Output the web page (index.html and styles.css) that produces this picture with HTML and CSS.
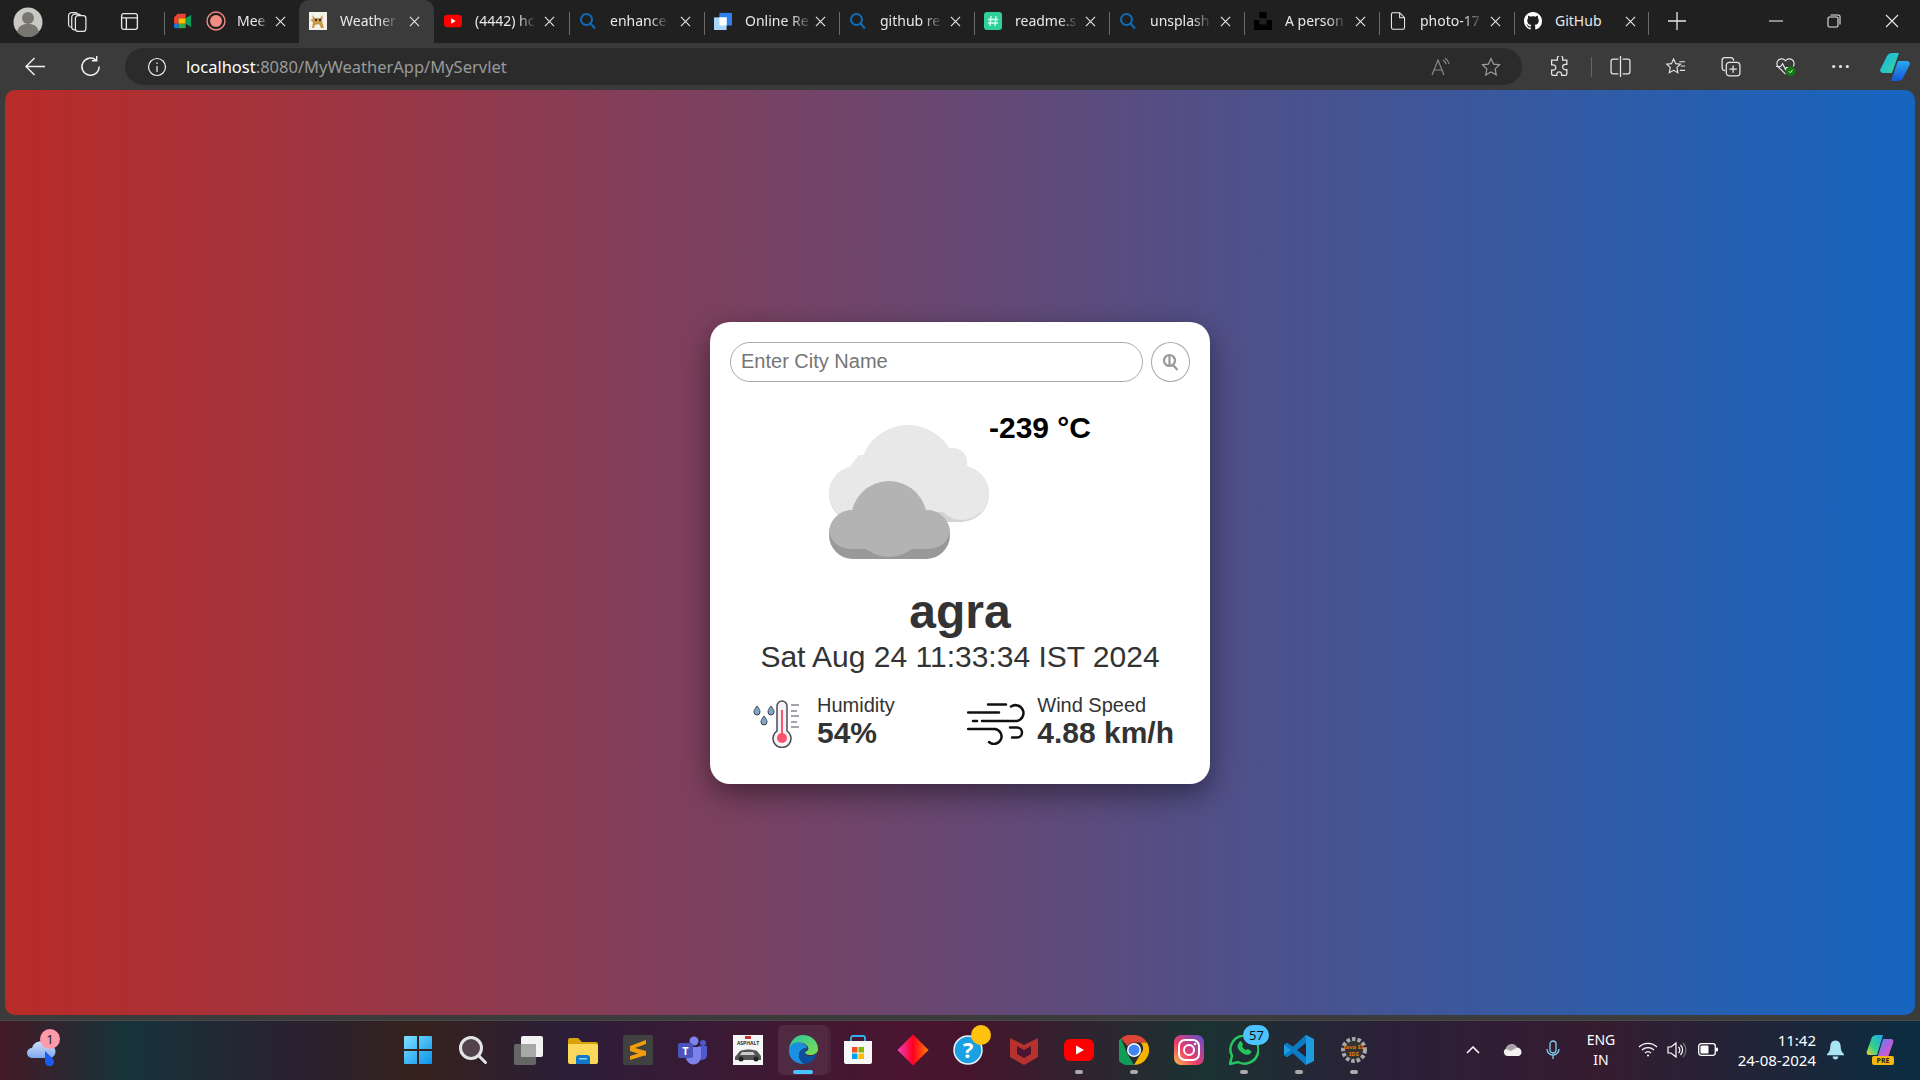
FILE: index.html
```html
<!DOCTYPE html>
<html>
<head>
    <meta charset="utf-8" />
    <title>Weather</title>
    <link rel="stylesheet" href="styles.css">
</head>
<body>
    <svg class="defs" width="0" height="0">
        <symbol id="x" viewBox="0 0 12 12"><path d="M1 1l10 10M11 1L1 11" fill="none" stroke="#e8e8e8" stroke-width="1.2"/></symbol>
        <symbol id="find" viewBox="0 0 18 18"><circle cx="7.5" cy="7.5" r="5.5" fill="none" stroke="#0f6cbd" stroke-width="2"/><path d="M11.5 11.5l4.5 5" stroke="#0f6cbd" stroke-width="2"/></symbol>
    </svg>

    <!-- tab strip -->
    <div class="tabstrip">
        <div class="strip-left">
            <svg class="avatar" viewBox="0 0 30 30"><circle cx="15" cy="15" r="14.5" fill="#c9c8c4"/><circle cx="15" cy="11" r="6" fill="#77766f"/><path d="M4 25c2-7 6-8 11-8s9 1 11 8a14 14 0 0 1-22 0z" fill="#77766f"/></svg>
            <svg class="strip-icon workspace" viewBox="0 0 20 20" fill="#202020" stroke="#e6e6e6" stroke-width="1.2"><rect x="1.500" y="1.500" width="9" height="14" rx="3"/><rect x="4.500" y="3" width="9" height="15" rx="3"/><rect x="8" y="4.500" width="10" height="15" rx="2.500"/></svg>
            <svg class="strip-icon vertical" viewBox="0 0 20 20" fill="none" stroke="#e6e6e6" stroke-width="1.3"><rect x="2.5" y="2.5" width="15" height="15" rx="2"/><path d="M2.5 6.5h15M7 6.5v11"/></svg>
        </div>
        <div class="tab first">
            <svg class="fav" viewBox="0 0 20 18"><path d="M4 1h9v5H5v6H0V5z" fill="#ea4335"/><path d="M0 12h5v5H2a2 2 0 0 1-2-2z" fill="#1a73e8"/><path d="M5 12h8v5H5z" fill="#34a853"/><path d="M5 6h8v6H5z" fill="#fbbc04"/><path d="M13 6l6-4v14l-6-4z" fill="#0f9d58"/></svg>
            <svg class="fav rec" viewBox="0 0 20 20"><circle cx="10" cy="10" r="9" fill="none" stroke="#f28b82" stroke-width="1.4"/><circle cx="10" cy="10" r="6" fill="#f28b82"/></svg>
            <span class="tab-title">Mee</span>
            <svg class="close"><use href="#x"/></svg>
        </div>
        <div class="tab active">
            <svg class="fav" viewBox="0 0 18 18"><rect width="18" height="18" fill="#f4f2ea"/><path d="M3 3l3 3h5l3-3-1 6 2 7h-3l-2-4-4 1-1 3H3l1-6-3-2 3-1z" fill="#c79a4b"/><path d="M6 7h2v2H6zM10 7h2v2h-2z" fill="#3a3020"/></svg>
            <span class="tab-title">Weather</span>
            <svg class="close"><use href="#x"/></svg>
        </div>
        <div class="tab nosep">
            <svg class="fav" viewBox="0 0 20 14"><rect width="20" height="14" rx="4" fill="#f00"/><path d="M8 4l5 3-5 3z" fill="#fff"/></svg>
            <span class="tab-title">(4442) hc</span>
            <svg class="close"><use href="#x"/></svg>
        </div>
        <div class="tab">
            <svg class="fav find"><use href="#find"/></svg>
            <span class="tab-title">enhance</span>
            <svg class="close"><use href="#x"/></svg>
        </div>
        <div class="tab">
            <svg class="fav" viewBox="0 0 20 20"><rect x="6" y="1" width="14" height="14" fill="#2f80ed"/><rect y="6" width="14" height="14" fill="#a9d6fb"/><rect x="6" y="6" width="8" height="9" fill="#fff"/></svg>
            <span class="tab-title">Online Re</span>
            <svg class="close"><use href="#x"/></svg>
        </div>
        <div class="tab">
            <svg class="fav find"><use href="#find"/></svg>
            <span class="tab-title">github re</span>
            <svg class="close"><use href="#x"/></svg>
        </div>
        <div class="tab">
            <svg class="fav" viewBox="0 0 18 18"><rect width="18" height="18" rx="3" fill="#2fd09b"/><path d="M7 4L6 14M12 4l-1 10M4 7.500h10M4 11h10" stroke="#d8fff0" stroke-width="1.300"/></svg>
            <span class="tab-title">readme.s</span>
            <svg class="close"><use href="#x"/></svg>
        </div>
        <div class="tab">
            <svg class="fav find"><use href="#find"/></svg>
            <span class="tab-title">unsplash</span>
            <svg class="close"><use href="#x"/></svg>
        </div>
        <div class="tab">
            <svg class="fav" viewBox="0 0 20 20"><path d="M6 0h8v7H6zM0 9h6v5h8V9h6v11H0z" fill="#000"/></svg>
            <span class="tab-title">A person</span>
            <svg class="close"><use href="#x"/></svg>
        </div>
        <div class="tab">
            <svg class="fav" viewBox="0 0 18 22" fill="none" stroke="#e8e8e8" stroke-width="1.300"><path d="M2 1h9l6 6v12a2 2 0 0 1-2 2H3a2 2 0 0 1-2-2V2z"/><path d="M11 1v6h6"/></svg>
            <span class="tab-title">photo-17</span>
            <svg class="close"><use href="#x"/></svg>
        </div>
        <div class="tab last">
            <svg class="fav" viewBox="0 0 16 16"><path fill="#fff" d="M8 0C3.58 0 0 3.58 0 8c0 3.54 2.29 6.53 5.47 7.59.4.07.55-.17.55-.38 0-.19-.01-.82-.01-1.49-2.01.37-2.53-.49-2.69-.94-.09-.23-.48-.94-.82-1.13-.28-.15-.68-.52-.01-.53.63-.01 1.08.58 1.23.82.72 1.21 1.87.87 2.33.66.07-.52.28-.87.51-1.07-1.78-.2-3.64-.89-3.64-3.95 0-.87.31-1.59.82-2.15-.08-.2-.36-1.02.08-2.12 0 0 .67-.21 2.2.82.64-.18 1.32-.27 2-.27.68 0 1.36.09 2 .27 1.53-1.04 2.2-.82 2.2-.82.44 1.1.16 1.92.08 2.12.51.56.82 1.27.82 2.15 0 3.07-1.87 3.75-3.65 3.95.29.25.54.73.54 1.48 0 1.07-.01 1.93-.01 2.2 0 .21.15.46.55.38A8.013 8.013 0 0016 8c0-4.42-3.58-8-8-8z"/></svg>
            <span class="tab-title plain">GitHub</span>
            <svg class="close"><use href="#x"/></svg>
        </div>
        <svg class="plus" viewBox="0 0 18 18"><path d="M9 0v18M0 9h18" stroke="#e8e8e8" stroke-width="1.300"/></svg>
        <div class="window-controls">
            <svg viewBox="0 0 14 14"><path d="M0 7h14" stroke="#e8e8e8" stroke-width="1.100"/></svg>
            <svg viewBox="0 0 14 14" fill="none" stroke="#e8e8e8" stroke-width="1.100"><rect x="1" y="3" width="10" height="10" rx="1.500"/><path d="M3.500 1h8a1.500 1.500 0 0 1 1.500 1.500v8"/></svg>
            <svg viewBox="0 0 14 14"><path d="M1 1l12 12M13 1L1 13" stroke="#e8e8e8" stroke-width="1.100"/></svg>
        </div>
    </div>

    <!-- toolbar -->
    <div class="toolbar">
        <svg class="nav back" viewBox="0 0 22 22" fill="none" stroke="#f0f0f0" stroke-width="1.500"><path d="M21 11H2M10 2l-9 9 9 9"/></svg>
        <svg class="nav reload" viewBox="0 0 22 22" fill="none" stroke="#f0f0f0" stroke-width="1.500"><path d="M17 4.500A9 9 0 1 0 20 11"/><path d="M17.500 0v5h-5"/></svg>
        <div class="addressbar">
            <svg class="info" viewBox="0 0 20 20" fill="none" stroke="#eee" stroke-width="1.200"><circle cx="10" cy="10" r="8.500"/><path d="M10 9v6M10 5.500v1.500"/></svg>
            <span class="url"><span class="host">localhost</span>:8080/MyWeatherApp/MyServlet</span>
            <svg class="bar-icon readaloud" viewBox="0 0 20 20" fill="none" stroke="#8a8a8a" stroke-width="1.200"><path d="M1 18L7 3l6 15M3 13h8M12 3a6 6 0 0 1 3 4M14 1a9 9 0 0 1 4 6"/></svg>
            <svg class="bar-icon" viewBox="0 0 20 20" fill="none" stroke="#9a9a9a" stroke-width="1.200"><path d="M10 1.500l2.600 5.600 6 .7-4.500 4.100 1.200 6L10 15l-5.300 3 1.200-6L1.400 7.800l6-.7z"/></svg>
        </div>
        <div class="tools">
            <svg class="tool" viewBox="0 0 20 20" fill="none" stroke="#e6e6e6" stroke-width="1.200"><path d="M8 1.500a2.500 2.500 0 0 1 5 1V4h4v4h-1.500a2.500 2.500 0 0 0 0 5H17v4a1.500 1.500 0 0 1-1.500 1.500H12V17a2.300 2.300 0 0 0-4.500 0v1.500H4A1.500 1.500 0 0 1 2.500 17v-3.500H4a2.500 2.500 0 0 0 0-5H2.500V4H8z"/></svg>
            <span class="tool-sep"></span>
            <svg class="tool" viewBox="0 0 20 20" fill="none" stroke="#e6e6e6" stroke-width="1.200"><path d="M10 0v20M8 3H3a2 2 0 0 0-2 2v10a2 2 0 0 0 2 2h5M12 3h5a2 2 0 0 1 2 2v10a2 2 0 0 1-2 2h-5"/></svg>
            <svg class="tool" viewBox="0 0 22 20" fill="none" stroke="#e6e6e6" stroke-width="1.200"><path d="M9 2l2.200 5 5 .5-3.700 3.500 1 5.500L9 14l-4.500 2.500 1-5.500L1.800 7.500l5-.5z"/><path d="M15 5h6M16.500 9.500H21M15.500 14H21"/></svg>
            <svg class="tool" viewBox="0 0 20 20" fill="none" stroke="#e6e6e6" stroke-width="1.200"><path d="M5 14c-2 0-3-1-3-3V4c0-1.500 1-2.500 2.500-2.500H10c1.500 0 3 1 3 3"/><rect x="6" y="6" width="13" height="13" rx="3"/><path d="M12.500 9v7M9 12.500h7"/></svg>
            <svg class="tool" viewBox="0 0 22 20"><path d="M11 18L3 10a5 5 0 0 1 8-6 5 5 0 0 1 8 6" fill="none" stroke="#e6e6e6" stroke-width="1.200"/><path d="M1 10h5l2-3 3 6 1-2h2" fill="none" stroke="#e6e6e6" stroke-width="1.200"/><circle cx="16.500" cy="15" r="5" fill="#107c10"/><path d="M14.500 15l1.500 1.500 2.500-3" fill="none" stroke="#fff" stroke-width="1"/></svg>
            <svg class="tool" viewBox="0 0 20 20" fill="#e6e6e6"><circle cx="3.500" cy="10" r="1.500"/><circle cx="10" cy="10" r="1.500"/><circle cx="16.500" cy="10" r="1.500"/></svg>
            <svg class="copilot" viewBox="0 0 30 28">
                <defs>
                    <linearGradient id="cpA" x1="0" y1="0" x2="1" y2="1"><stop offset="0" stop-color="#1bb4e8"/><stop offset="1" stop-color="#35d6a0"/></linearGradient>
                    <linearGradient id="cpB" x1="0" y1="0" x2="0" y2="1"><stop offset="0" stop-color="#2aa8f0"/><stop offset="1" stop-color="#1456d8"/></linearGradient>
                </defs>
                <path d="M7 3c1-2 3-3 5-3h7l-7 20H3c-2 0-3.500-2-2.500-4z" fill="url(#cpA)"/>
                <path d="M23 25c-1 2-3 3-5 3h-7l7-20h9c2 0 3.500 2 2.500 4z" fill="url(#cpB)"/>
            </svg>
        </div>
    </div>

    <!-- page -->
    <div class="frame">
        <main class="viewport">
            <div class="card">
                <form class="search" action="javascript:void(0);">
                    <input class="city-input" type="text" placeholder="Enter City Name">
                    <button class="search-btn" type="button">
                        <svg viewBox="0 0 18 18" width="18" height="18" fill="none" stroke="#999" stroke-width="2.200"><circle cx="7.500" cy="7.500" r="5.500"/><path d="M7.500 2v11M10 11l5.500 6"/></svg>
                    </button>
                </form>

                <div class="weather">
                    <svg class="weather-icon" viewBox="0 0 160 134">
                        <rect x="0" y="41" width="160" height="56" rx="28" fill="#d3d3d3"/>
                        <circle cx="27" cy="68" r="27" fill="#e8e8e8"/>
                        <circle cx="133" cy="68" r="27" fill="#e8e8e8"/>
                        <circle cx="124" cy="37" r="14" fill="#e8e8e8"/>
                        <circle cx="79" cy="48" r="48" fill="#e8e8e8"/>
                        <path d="M160 68C160 80 148 87 133 87H27C12 87 0 80 0 68L30 30H130z" fill="#e8e8e8"/>
                        <rect x="0" y="85" width="121" height="49" rx="24" fill="#999"/>
                        <circle cx="60" cy="94" r="38" fill="#b3b3b3"/>
                        <path d="M0 108C0 95 11 85 24 85H97C110 85 121 95 121 108 118 118 110 124 97 124H24C11 124 3 118 0 108z" fill="#b3b3b3"/>
                    </svg>
                    <div class="temp">-239 °C</div>
                </div>

                <h1 class="city">agra</h1>
                <div class="date">Sat Aug 24 11:33:34 IST 2024</div>

                <div class="details">
                    <div class="detail humidity">
                        <svg class="humidity-icon" viewBox="0 0 47 48">
                            <path d="M24 6a5 5 0 0 1 10 0v25a9 9 0 1 1-10 0z" fill="#f3f3f6" stroke="#4b4b5c" stroke-width="1.500"/>
                            <path d="M29 10v26" stroke="#f9526f" stroke-width="2"/>
                            <circle cx="29" cy="38" r="5" fill="#f9526f"/>
                            <path d="M38 5h8M38 11h6M38 16h8M38 22h6M38 27h8" stroke="#4b4b5c" stroke-width="1.200"/>
                            <g fill="#7fa6c4" stroke="#3f4658" stroke-width="1">
                                <path d="M4 6c2 3 3 4 3 6a3 3 0 0 1-6 0c0-2 1-3 3-6z"/>
                                <path d="M18 6c2 3 3 4 3 6a3 3 0 0 1-6 0c0-2 1-3 3-6z"/>
                                <path d="M11 16c2 3 3 4 3 6a3 3 0 0 1-6 0c0-2 1-3 3-6z"/>
                            </g>
                        </svg>
                        <div class="detail-text">
                            <span class="detail-label">Humidity</span>
                            <span class="detail-value">54%</span>
                        </div>
                    </div>
                    <div class="detail wind">
                        <svg class="wind-icon" viewBox="0 0 60 42" fill="none" stroke="#111" stroke-width="2.500" stroke-linecap="round">
                            <path d="M21 1.500h18M1 9.500h31M6 18h4"/>
                            <path d="M44 3.500a8 8 0 1 1 6 14.500H15"/>
                            <path d="M1 26h27a7.500 7.500 0 1 1-6 13"/>
                            <path d="M43 24.500h7a5 5 0 0 1 0 10h-5"/>
                        </svg>
                        <div class="detail-text">
                            <span class="detail-label">Wind Speed</span>
                            <span class="detail-value">4.88 km/h</span>
                        </div>
                    </div>
                </div>
            </div>
        </main>
    </div>

    <!-- taskbar -->
    <footer class="taskbar">
        <div class="widgets">
            <svg viewBox="0 0 32 28" width="32" height="28">
                <defs><linearGradient id="wCloud" x1="0" y1="0" x2="0" y2="1"><stop offset="0" stop-color="#cfe0fb"/><stop offset="1" stop-color="#7fa8ee"/></linearGradient></defs>
                <path d="M6 20a5 5 0 0 1 0-10 9 9 0 0 1 16-3 6.500 6.500 0 0 1 2 13z" fill="url(#wCloud)"/>
                <path d="M19 13l8 8a4.500 4.500 0 1 1-8 3z" fill="#1a5cf0"/>
            </svg>
            <span class="widget-badge">1</span>
        </div>

        <div class="apps">
            <div class="app">
                <svg viewBox="0 0 30 30"><defs><linearGradient id="win" x1="0" y1="0" x2="1" y2="1"><stop offset="0" stop-color="#7fe0ff"/><stop offset="1" stop-color="#0a93e8"/></linearGradient></defs><path d="M1 2a1 1 0 0 1 1-1h12v13H1zM16 1h12a1 1 0 0 1 1 1v12H16zM1 16h13v13H2a1 1 0 0 1-1-1zM16 16h13v12a1 1 0 0 1-1 1H16z" fill="url(#win)"/></svg>
            </div>
            <div class="app">
                <svg viewBox="0 0 30 30"><circle cx="13" cy="13" r="10.500" fill="#54424a" stroke="#e4e4e4" stroke-width="3"/><path d="M21 21l6.500 6.500" stroke="#e4e4e4" stroke-width="3" stroke-linecap="round"/></svg>
            </div>
            <div class="app">
                <svg viewBox="0 0 30 30"><rect x="1" y="9" width="22" height="21" rx="2" fill="#666"/><rect x="8" y="1" width="22" height="21" rx="2" fill="#f2f2f2"/><rect x="8" y="9" width="15" height="13" fill="#a8a8a8"/></svg>
            </div>
            <div class="app">
                <svg viewBox="0 0 30 30"><path d="M0 5a2 2 0 0 1 2-2h8l4 4h14a2 2 0 0 1 2 2v4H0z" fill="#d8a106"/><path d="M0 9h28a2 2 0 0 1 2 2v16a2 2 0 0 1-2 2H2a2 2 0 0 1-2-2z" fill="#fbd75b"/><path d="M8 29v-6a3 3 0 0 1 3-3h8a3 3 0 0 1 3 3v6z" fill="#0f78c9"/><rect x="11" y="23" width="8" height="1.500" fill="#8fd0f5"/></svg>
            </div>
            <div class="app">
                <svg viewBox="0 0 30 30"><rect width="30" height="30" rx="2" fill="#414141"/><path d="M23 5L7 11v5l16 5v-5L12 13l11-4zM7 25l16-5v-4L7 21z" fill="#f29d0c"/></svg>
            </div>
            <div class="app">
                <svg viewBox="0 0 30 30"><circle cx="16" cy="6" r="4.500" fill="#7b83eb"/><circle cx="25" cy="8" r="3" fill="#5059c9"/><path d="M20 11h9v9a5 5 0 0 1-9 3z" fill="#5059c9"/><path d="M8 12h15v10a7 7 0 0 1-15 0z" fill="#7b83eb"/><rect x="0" y="8" width="15" height="15" rx="2" fill="#4b53bc"/><text class="teams-t" x="7.500" y="20">T</text></svg>
            </div>
            <div class="app">
                <svg viewBox="0 0 30 30"><rect width="30" height="30" fill="#f6f6f6"/><rect x="12" y="1" width="6" height="3" fill="#c33"/><text class="asphalt-t" x="15" y="10">ASPHALT</text><path d="M2 22l5-6c5-2 12-2 17 0l4 5v4H2z" fill="#555"/><path d="M9 17h11l2 3H7z" fill="#ccc"/><circle cx="8" cy="24" r="2.500" fill="#222"/><circle cx="23" cy="24" r="2.500" fill="#222"/></svg>
            </div>
            <div class="app current">
                <svg viewBox="0 0 30 30"><defs><linearGradient id="edgeA" x1="0" y1="0" x2="1" y2="1"><stop offset="0" stop-color="#2bc4a0"/><stop offset="1" stop-color="#7fe04f"/></linearGradient></defs><path d="M1 14C2 6 8 0 15 0c8 0 15 6 15 14 0 4-4 6-8 6-3 0-5-1-5-3 3-1 4-3 3-5-2-4-7-5-10-4-5 1-8 4-9 6z" fill="url(#edgeA)"/><path d="M1 14c1-5 8-8 13-6 3 1 5 3 5 5-5 0-8 3-8 8 0 3 2 6 5 8C8 29 0 24 1 14z" fill="#1b8fe0"/><path d="M16 29c-3-2-5-5-5-8 0-5 3-8 8-8 0 2-1 3-2 4 0 3 2 4 5 4 3 0 5-1 7-3-2 7-7 11-13 11z" fill="#0d4f9c"/></svg>
            </div>
            <div class="app">
                <svg viewBox="0 0 30 30"><path d="M8 7V3a2 2 0 0 1 2-2h10a2 2 0 0 1 2 2v4" fill="none" stroke="#2bb5f0" stroke-width="1.800"/><path d="M1 6h28v21a2 2 0 0 1-2 2H3a2 2 0 0 1-2-2z" fill="#f7f7f7"/><rect x="9" y="12" width="5.500" height="5.500" fill="#f25022"/><rect x="15.500" y="12" width="5.500" height="5.500" fill="#7fba00"/><rect x="9" y="18.500" width="5.500" height="5.500" fill="#00a4ef"/><rect x="15.500" y="18.500" width="5.500" height="5.500" fill="#ffb900"/></svg>
            </div>
            <div class="app">
                <span class="diamond"></span>
            </div>
            <div class="app">
                <svg viewBox="0 0 30 30"><circle cx="15" cy="15" r="14" fill="#1ba1e2" stroke="#e8f4f8" stroke-width="1.500"/><text class="help-q" x="15" y="23">?</text></svg>
                <span class="dot-badge"></span>
            </div>
            <div class="app">
                <svg viewBox="0 0 30 30"><path d="M1 3l14 7 14-7v19L15 30 1 22z" fill="#b6322f"/><path d="M8 11l7 4 7-4v8l-7 4-7-4z" fill="#4a1530"/></svg>
            </div>
            <div class="app running">
                <svg viewBox="0 0 30 30"><rect y="4" width="30" height="22" rx="6" fill="#f00"/><path d="M12 10.500l8 4.500-8 4.500z" fill="#fff"/></svg>
            </div>
            <div class="app running">
                <svg viewBox="0 0 30 30"><path d="M15 0a15 15 0 0 1 13 7.500H15A7.500 7.500 0 0 0 8.500 11L2 3.500A15 15 0 0 1 15 0z" fill="#db4437"/><path d="M2 3.500L8.500 19 15 30A15 15 0 0 1 2 3.500z" fill="#0f9d58"/><path d="M28 7.500A15 15 0 0 1 15 30l6.500-11a7.500 7.500 0 0 0 0-11.500z" fill="#f4b400"/><circle cx="15" cy="15" r="7" fill="#fff"/><circle cx="15" cy="15" r="5.500" fill="#4285f4"/></svg>
            </div>
            <div class="app">
                <svg viewBox="0 0 30 30"><defs><linearGradient id="ig" x1="0" y1="1" x2="1" y2="0"><stop offset="0" stop-color="#fdc24a"/><stop offset=".4" stop-color="#ee3a6a"/><stop offset="1" stop-color="#5d4fd0"/></linearGradient></defs><rect width="30" height="30" rx="7" fill="url(#ig)"/><rect x="5" y="5" width="20" height="20" rx="6" fill="none" stroke="#fff" stroke-width="2"/><circle cx="15" cy="15" r="5" fill="none" stroke="#fff" stroke-width="2"/><circle cx="21" cy="9" r="1.300" fill="#fff"/></svg>
            </div>
            <div class="app running">
                <svg viewBox="0 0 30 30"><path d="M1 29l2-8a14 14 0 1 1 6 6z" fill="none" stroke="#25c65f" stroke-width="2.500"/><path d="M10 8c-2 2-2 5 1 8s7 5 10 3c1-1 2-3 1-3l-3-2-2 1c-2-1-3-2-4-4l1-2-2-3c-1 0-2 1-2 2z" fill="#25c65f"/></svg>
                <span class="count-badge">57</span>
            </div>
            <div class="app running">
                <svg viewBox="0 0 30 30"><path d="M22 0l8 4v22l-8 4-13-12-6 4-3-2V10l3-2 6 4z" fill="#1f9ce0"/><path d="M22 0v30L9 18l-6 4-3-2 7-5-7-5 3-2 6 4z" fill="#0a7bc4"/><path d="M22 8v14l-9-7z" fill="#2a2030"/></svg>
            </div>
            <div class="app running">
                <svg viewBox="0 0 30 30"><circle cx="15" cy="15" r="11" fill="#333" stroke="#aaa" stroke-width="4" stroke-dasharray="3.500 2"/><text class="ide-t" x="15" y="14">Java EE</text><text class="ide-t" x="15" y="21">IDE</text></svg>
            </div>
        </div>

        <div class="tray">
            <svg class="tray-chevron" viewBox="0 0 14 8"><path d="M1 7l6-6 6 6" fill="none" stroke="#fff" stroke-width="1.500"/></svg>
            <svg class="tray-cloud" viewBox="0 0 20 13"><path d="M4 13a4 4 0 0 1-1-7.500A6 6 0 0 1 14 4.500 4.500 4.500 0 0 1 16 13z" fill="#f2f2f2"/><path d="M3 6a6 6 0 0 1 11-1.500L8 8z" fill="#a9a0a8"/></svg>
            <svg class="tray-mic" viewBox="0 0 14 20" fill="none" stroke="#7fd0ee" stroke-width="1.300"><rect x="4" y="1" width="6" height="12" rx="3"/><path d="M1 9a6 6 0 0 0 12 0M7 15v4"/></svg>
            <div class="lang">ENG<br>IN</div>
            <svg class="tray-wifi" viewBox="0 0 20 15" fill="none" stroke="#fff" stroke-width="1.300"><path d="M1 5a13 13 0 0 1 18 0M4 8a9 9 0 0 1 12 0M7 11a4.500 4.500 0 0 1 6 0"/><circle cx="10" cy="13.500" r="1" fill="#fff" stroke="none"/></svg>
            <svg class="tray-vol" viewBox="0 0 20 16" fill="none" stroke="#fff" stroke-width="1.200"><path d="M1 5h3l5-4v14l-5-4H1z"/><path d="M11.500 5a4 4 0 0 1 0 6M13.500 3a7 7 0 0 1 0 10"/><path d="M16 1a10 10 0 0 1 0 14" stroke="#777"/></svg>
            <svg class="tray-batt" viewBox="0 0 20 13"><rect x=".7" y=".7" width="16.600" height="11.600" rx="2.500" fill="none" stroke="#fff" stroke-width="1.300"/><rect x="2.500" y="2.500" width="8" height="8" rx="1" fill="#fff"/><rect x="18" y="4.500" width="2" height="4" rx="1" fill="#fff"/></svg>
            <div class="clock">11:42<br>24-08-2024</div>
            <svg class="tray-bell" viewBox="0 0 18 20"><path d="M9 0c3.500 0 5.500 3 5.500 6.500 0 4 1.500 6 3.500 8v1H0v-1c2-2 3.500-4 3.500-8C3.500 3 5.500 0 9 0z" fill="#a9e4f5"/><path d="M6 17h6a3 3 0 0 1-6 0z" fill="#a9e4f5"/></svg>
            <div class="tray-copilot">
                <svg viewBox="0 0 28 24" width="28" height="24"><defs><linearGradient id="cpC" x1="0" y1="1" x2="1" y2="0"><stop offset="0" stop-color="#f0d030"/><stop offset=".4" stop-color="#35d08a"/><stop offset="1" stop-color="#20a8f0"/></linearGradient><linearGradient id="cpD" x1="0" y1="0" x2="1" y2="1"><stop offset="0" stop-color="#3a8ff0"/><stop offset=".5" stop-color="#b060e0"/><stop offset="1" stop-color="#f060a0"/></linearGradient></defs><path d="M6 2c1-1 3-2 4-2h7l-6 20H3c-2 0-3-2-2-4z" fill="url(#cpC)"/><path d="M22 22c-1 1-3 2-4 2h-7l6-20h8c2 0 3 2 2 4z" fill="url(#cpD)"/></svg>
                <span class="pre">PRE</span>
            </div>
        </div>
    </footer>
</body>
</html>
```

FILE: styles.css
```css
* {
    box-sizing: border-box;
}

body {
    margin: 0;
    width: 1920px;
    height: 1080px;
    overflow: hidden;
    display: flex;
    flex-direction: column;
    background: #3b3b3b;
    font-family: "Noto Sans", "Liberation Sans", sans-serif;
}

.defs {
    position: absolute;
}

/* Tab strip */
.tabstrip {
    height: 43px;
    display: flex;
    align-items: center;
    background: #202020;
    color: #e8e8e8;
    flex: none;
}

.strip-left {
    width: 164px;
    display: flex;
    align-items: center;
    flex: none;
    padding-left: 13px;
}

.avatar {
    width: 30px;
    height: 30px;
}

.strip-icon {
    width: 21px;
    height: 21px;
}

.workspace {
    margin-left: 24px;
}

.vertical {
    margin-left: 31px;
}

.tab {
    width: 135px;
    height: 43px;
    flex: none;
    display: flex;
    align-items: center;
    padding: 0 0 2px 9px;
    position: relative;
    border-left: 1px solid #6a6a6a;
    border-image: linear-gradient(#202020 12px, #6a6a6a 12px, #6a6a6a 34px, #202020 34px) 1;
}

.tab.active {
    background: #3b3b3b;
    border-radius: 10px 10px 0 0;
    border: none;
    padding-left: 10px;
}

.tab.nosep {
    border: none;
    padding-left: 10px;
}

.tab.last {
    border-right: 1px solid #6a6a6a;
}

.fav {
    width: 18px;
    height: 18px;
    flex: none;
}

.rec {
    width: 20px;
    height: 20px;
    margin-left: 14px;
}

.tab-title {
    font-size: 14px;
    margin-left: 13px;
    white-space: nowrap;
    -webkit-mask-image: linear-gradient(to right, #000 72%, rgba(0, 0, 0, .15));
    mask-image: linear-gradient(to right, #000 72%, rgba(0, 0, 0, .15));
}

.tab-title.plain {
    -webkit-mask-image: none;
    mask-image: none;
}

.first .tab-title {
    margin-left: 11px;
}

.close {
    width: 11px;
    height: 11px;
    position: absolute;
    left: 110px;
    top: 16px;
}

.plus {
    width: 18px;
    height: 18px;
    margin: 0 0 2px 19px;
    flex: none;
}

.window-controls {
    margin: 0 0 2px auto;
    display: flex;
    align-items: center;
    gap: 44px;
    padding-right: 21px;
}

.window-controls svg {
    width: 14px;
    height: 14px;
}

/* Toolbar */
.toolbar {
    height: 47px;
    flex: none;
    display: flex;
    align-items: center;
    padding: 0 10px 0 25px;
    background: #3b3b3b;
}

.nav {
    width: 21px;
    height: 21px;
    flex: none;
}

.reload {
    margin-left: 34px;
}

.addressbar {
    width: 1397px;
    height: 37px;
    margin-left: 24px;
    border-radius: 19px;
    background: #2b2b2b;
    display: flex;
    align-items: center;
    padding: 0 21px 0 22px;
    flex: none;
}

.info {
    width: 20px;
    height: 20px;
    flex: none;
}

.url {
    margin-left: 19px;
    font-size: 16.5px;
    color: #9a9a9a;
}

.host {
    color: #fff;
}

.bar-icon {
    width: 20px;
    height: 20px;
    flex: none;
}

.readaloud {
    margin-left: auto;
    margin-right: 30px;
}

.tools {
    display: flex;
    align-items: center;
    margin-left: 27px;
}

.tool {
    width: 21px;
    height: 21px;
    flex: none;
    margin-right: 34px;
}

.tool-sep {
    width: 1px;
    height: 20px;
    background: #666;
    margin: 0 18.5px 0 -13.5px;
}

.copilot {
    width: 30px;
    height: 28px;
    margin-left: -5px;
    flex: none;
}

/* Page area */
.frame {
    height: 925px;
    flex: none;
    padding: 0 5px;
}

.viewport {
    height: 100%;
    border-radius: 10px;
    background: linear-gradient(to right, #b92b27, #1565c0);
    display: flex;
    align-items: center;
    justify-content: center;
    font-family: "Liberation Sans", Arial, sans-serif;
    color: #333;
}

.card {
    width: 500px;
    height: 462px;
    background: #fff;
    border-radius: 20px;
    padding: 20px;
    box-shadow: 0 10px 30px rgba(0, 0, 0, .45);
}

.search {
    display: flex;
    gap: 8px;
}

.city-input {
    flex: 1;
    height: 40px;
    border: 1px solid #aaa;
    border-radius: 20px;
    padding: 0 10px;
    font: 20px "Liberation Sans", Arial, sans-serif;
    outline: none;
}

.city-input::placeholder {
    color: #757575;
}

.search-btn {
    width: 39px;
    height: 40px;
    padding: 0;
    border: 1px solid #aaa;
    border-radius: 50%;
    background: #fff;
    display: flex;
    align-items: center;
    justify-content: center;
}

.weather {
    display: flex;
    justify-content: center;
    align-items: flex-start;
    margin-top: 29px;
    height: 148px;
}

.weather-icon {
    width: 160px;
    height: 134px;
    margin-top: 14px;
    flex: none;
}

.temp {
    font-size: 30px;
    font-weight: bold;
    color: #000;
    line-height: 34px;
}

.city {
    margin: 26px 0 0;
    font-size: 48px;
    line-height: 54px;
    text-align: center;
}

.date {
    font-size: 30px;
    line-height: 36px;
    text-align: center;
}

.details {
    display: flex;
    margin-top: 18px;
    padding: 0 16px 0 23px;
    justify-content: space-between;
}

.detail {
    display: flex;
    align-items: center;
}

.humidity-icon {
    width: 47px;
    height: 48px;
    margin: 6px 17px 0 0;
}

.wind-icon {
    width: 60px;
    height: 42px;
    margin: 6px 10px 0 0;
}

.detail-text {
    display: flex;
    flex-direction: column;
}

.detail-label {
    font-size: 20px;
    line-height: 24px;
}

.detail-value {
    font-size: 30px;
    font-weight: bold;
    line-height: 32px;
}

/* Taskbar */
.taskbar {
    margin-top: 5px;
    height: 60px;
    flex: none;
    display: flex;
    align-items: center;
    position: relative;
    padding-bottom: 2px;
    background:
        linear-gradient(to right, #431a26 0, #17333a 125px, #2a2030 300px, #35221c 420px, #2c1e38 560px, #4a1530 900px, #45152c 970px, #1a3232 1200px, #2c1f38 1400px, #351c30 1600px, #0e2c40 1900px);
    border-top: 1px solid #4a4a4a;
    color: #fff;
}

.widgets {
    width: 390px;
    flex: none;
    padding-left: 26px;
    padding-top: 5px;
    position: relative;
    display: flex;
}

.widget-badge {
    position: absolute;
    left: 40px;
    top: -4px;
    width: 20px;
    height: 20px;
    border-radius: 50%;
    background: #ff9ba8;
    color: #222;
    font-size: 13px;
    line-height: 20px;
    text-align: center;
}

.apps {
    display: flex;
    align-items: center;
    width: 994px;
    flex: none;
}

.app {
    width: 55.1px;
    height: 50px;
    flex: none;
    display: flex;
    align-items: center;
    justify-content: center;
    position: relative;
}

.app svg {
    width: 30px;
    height: 30px;
}

.app.current {
    background: rgba(255, 255, 255, .08);
    border-radius: 6px;
    box-shadow: 4px 0 0 -1px rgba(255, 255, 255, .05);
    width: 50px;
    margin: 0 2.55px;
}

.app.current::after,
.app.running::after {
    content: "";
    position: absolute;
    left: 50%;
    bottom: 1px;
    width: 8px;
    height: 4px;
    margin-left: -4px;
    border-radius: 2px;
    background: #aaa;
}

.app.current::after {
    width: 20px;
    margin-left: -10px;
    background: #4cc2ff;
}

.diamond {
    width: 22px;
    height: 22px;
    transform: rotate(45deg);
    background: linear-gradient(to top right, #f040c0, #ff0020 50%, #ff8000);
}

.dot-badge {
    position: absolute;
    top: 0;
    left: 30px;
    width: 20px;
    height: 20px;
    border-radius: 50%;
    background: #ffc20e;
}

.count-badge {
    position: absolute;
    top: 0;
    left: 27px;
    width: 26px;
    height: 20px;
    border-radius: 10px;
    background: #4cc2ff;
    color: #111;
    font-size: 13px;
    line-height: 20px;
    text-align: center;
}

.teams-t {
    fill: #fff;
    font: bold 11px "Noto Sans", sans-serif;
    text-anchor: middle;
}

.help-q {
    fill: #fff;
    font: bold 22px "Noto Sans", sans-serif;
    text-anchor: middle;
}

.asphalt-t {
    fill: #333;
    font: bold 5px "Noto Sans", sans-serif;
    text-anchor: middle;
}

.ide-t {
    fill: #e07a10;
    font: bold 6px "Noto Sans", sans-serif;
    text-anchor: middle;
}

.tray {
    display: flex;
    align-items: center;
    flex: 1;
    font-size: 14px;
    line-height: 20px;
    position: relative;
    height: 100%;
}

.tray-chevron {
    width: 14px;
    height: 8px;
    margin-left: 82px;
}

.tray-cloud {
    width: 20px;
    height: 13px;
    margin-left: 23px;
}

.tray-mic {
    width: 14px;
    height: 20px;
    margin-left: 23px;
}

.lang {
    width: 40px;
    margin-left: 21px;
    text-align: center;
}

.tray-wifi {
    width: 20px;
    height: 15px;
    margin-left: 17px;
}

.tray-vol {
    width: 20px;
    height: 16px;
    margin-left: 9px;
}

.tray-batt {
    width: 20px;
    height: 13px;
    margin-left: 11px;
}

.clock {
    width: 90px;
    margin-left: 8px;
    font-size: 15px;
    text-align: right;
}

.tray-bell {
    width: 17px;
    height: 20px;
    margin-left: 11px;
}

.tray-copilot {
    margin-left: 22px;
    position: relative;
    display: flex;
    padding-bottom: 6px;
}

.pre {
    position: absolute;
    left: 6px;
    bottom: 0;
    width: 22px;
    height: 9px;
    border-radius: 2px;
    background: #f5b70f;
    color: #222;
    font-size: 7px;
    font-weight: bold;
    line-height: 9px;
    text-align: center;
}
```
